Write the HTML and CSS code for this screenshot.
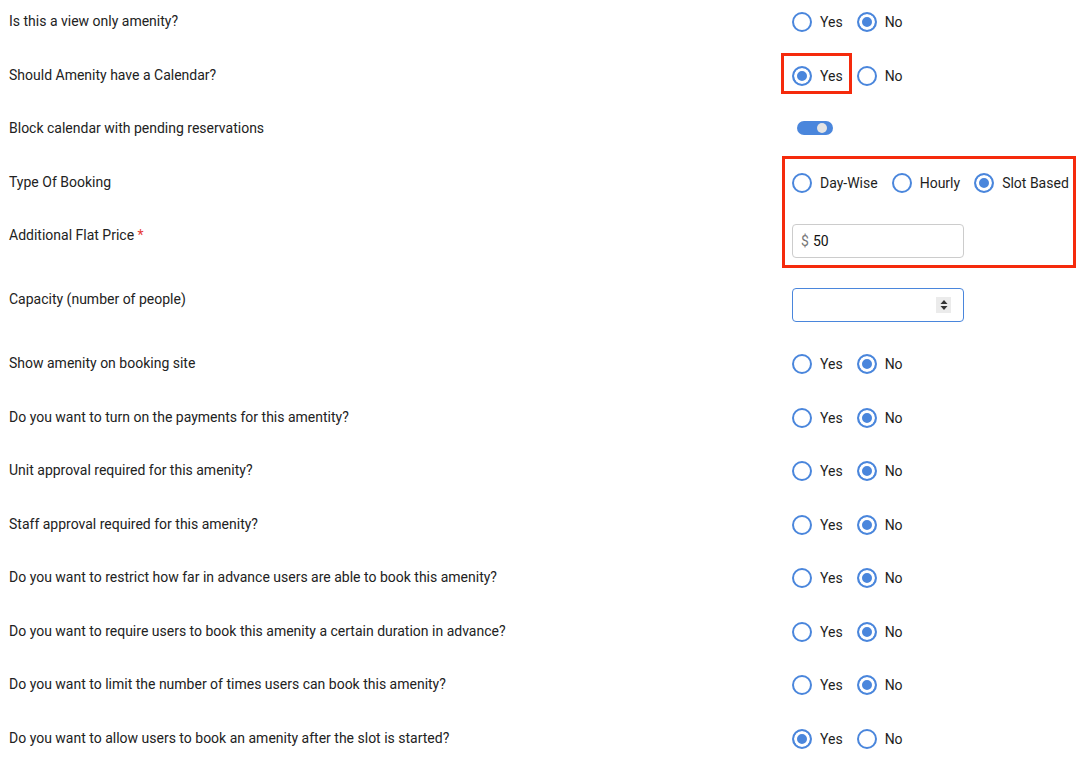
FILE: index.html
```html
<!DOCTYPE html>
<html>
<head>
    <title>Amenity settings</title>
    <link rel="stylesheet" href="styles.css">
</head>
<body>
    <div class="form">
        <div class="row">
            <div class="label">Is this a view only amenity?</div>
            <div class="control">
                <label class="opt"><input type="radio" name="r1">Yes</label>
                <label class="opt"><input type="radio" name="r1" checked>No</label>
            </div>
        </div>
        <div class="row">
            <div class="label">Should Amenity have a Calendar?</div>
            <div class="control">
                <label class="opt"><input type="radio" name="r2" checked>Yes</label>
                <label class="opt"><input type="radio" name="r2">No</label>
            </div>
        </div>
        <div class="row">
            <div class="label">Block calendar with pending reservations</div>
            <div class="control">
                <span class="toggle"><span class="knob"></span></span>
            </div>
        </div>
        <div class="row">
            <div class="label">Type Of Booking</div>
            <div class="control">
                <label class="opt"><input type="radio" name="r3">Day-Wise</label>
                <label class="opt"><input type="radio" name="r3">Hourly</label>
                <label class="opt"><input type="radio" name="r3" checked>Slot Based</label>
            </div>
        </div>
        <div class="row tall">
            <div class="label">Additional Flat Price <span class="req">*</span></div>
            <div class="control">
                <div class="field"><span class="prefix">$</span>50</div>
            </div>
        </div>
        <div class="row tall">
            <div class="label">Capacity (number of people)</div>
            <div class="control">
                <div class="field focus">
                    <span class="spin">
                        <svg width="8" height="12" viewBox="0 0 8 12"><path d="M4 1 L7.5 5 H0.5 Z M4 11 L7.5 7 H0.5 Z" fill="#333"/></svg>
                    </span>
                </div>
            </div>
        </div>
        <div class="row">
            <div class="label">Show amenity on booking site</div>
            <div class="control">
                <label class="opt"><input type="radio" name="r4">Yes</label>
                <label class="opt"><input type="radio" name="r4" checked>No</label>
            </div>
        </div>
        <div class="row">
            <div class="label">Do you want to turn on the payments for this amentity?</div>
            <div class="control">
                <label class="opt"><input type="radio" name="r5">Yes</label>
                <label class="opt"><input type="radio" name="r5" checked>No</label>
            </div>
        </div>
        <div class="row">
            <div class="label">Unit approval required for this amenity?</div>
            <div class="control">
                <label class="opt"><input type="radio" name="r6">Yes</label>
                <label class="opt"><input type="radio" name="r6" checked>No</label>
            </div>
        </div>
        <div class="row">
            <div class="label">Staff approval required for this amenity?</div>
            <div class="control">
                <label class="opt"><input type="radio" name="r7">Yes</label>
                <label class="opt"><input type="radio" name="r7" checked>No</label>
            </div>
        </div>
        <div class="row">
            <div class="label">Do you want to restrict how far in advance users are able to book this amenity?</div>
            <div class="control">
                <label class="opt"><input type="radio" name="r8">Yes</label>
                <label class="opt"><input type="radio" name="r8" checked>No</label>
            </div>
        </div>
        <div class="row">
            <div class="label">Do you want to require users to book this amenity a certain duration in advance?</div>
            <div class="control">
                <label class="opt"><input type="radio" name="r9">Yes</label>
                <label class="opt"><input type="radio" name="r9" checked>No</label>
            </div>
        </div>
        <div class="row">
            <div class="label">Do you want to limit the number of times users can book this amenity?</div>
            <div class="control">
                <label class="opt"><input type="radio" name="r10">Yes</label>
                <label class="opt"><input type="radio" name="r10" checked>No</label>
            </div>
        </div>
        <div class="row">
            <div class="label">Do you want to allow users to book an amenity after the slot is started?</div>
            <div class="control">
                <label class="opt"><input type="radio" name="r11" checked>Yes</label>
                <label class="opt"><input type="radio" name="r11">No</label>
            </div>
        </div>

        <div class="mark mark-calendar"></div>
        <div class="mark mark-booking"></div>
    </div>
</body>
</html>
```

FILE: styles.css
```css
* {
    box-sizing: border-box;
}

body {
    margin: 0;
    background: #fff;
    font-family: Roboto, "Liberation Sans", sans-serif;
    font-size: 14px;
    color: #222;
}

.form {
    position: relative;
    padding: 10px 0 0 9px;
}

.row {
    display: flex;
    align-items: flex-start;
    height: 53.5px;
}

.row.tall {
    height: 64px;
}

.label {
    width: 783px;
    line-height: 22px;
}

.req {
    color: #e53935;
}

.control {
    display: flex;
    align-items: center;
    gap: 14px;
    min-height: 22px;
}

.opt {
    display: inline-flex;
    align-items: center;
    gap: 8px;
    margin-top: 1px;
    line-height: 22px;
    color: #1e1e1e;
}

.opt input {
    appearance: none;
    -webkit-appearance: none;
    margin: 0;
    width: 20px;
    height: 20px;
    border: 2px solid #4a86dc;
    border-radius: 50%;
    background: #fff;
}

.opt input:checked {
    background: #4a86dc;
    box-shadow: inset 0 0 0 3px #fff;
}

.toggle {
    display: block;
    width: 36px;
    height: 14px;
    margin-left: 5px;
    border-radius: 7px;
    background: #4a86dc;
    position: relative;
}

.knob {
    position: absolute;
    top: 2px;
    right: 6px;
    width: 10px;
    height: 10px;
    border-radius: 50%;
    background: #e4e4e4;
}

.field {
    display: flex;
    align-items: center;
    width: 172px;
    height: 34px;
    padding: 0 8px;
    border: 1px solid #ccc;
    border-radius: 4px;
    color: #111;
}

.prefix {
    color: #777;
    margin-right: 4px;
}

.field.focus {
    border-color: #4a86dc;
    justify-content: flex-end;
    padding-right: 12px;
}

.spin {
    display: flex;
    align-items: center;
    justify-content: center;
    width: 15px;
    height: 16px;
    background: #ebebeb;
}

.mark {
    position: absolute;
    border: 3px solid #f52a0c;
}

.mark-calendar {
    left: 781px;
    top: 53px;
    width: 71px;
    height: 41px;
}

.mark-booking {
    left: 782px;
    top: 156px;
    width: 294px;
    height: 112px;
}
```
